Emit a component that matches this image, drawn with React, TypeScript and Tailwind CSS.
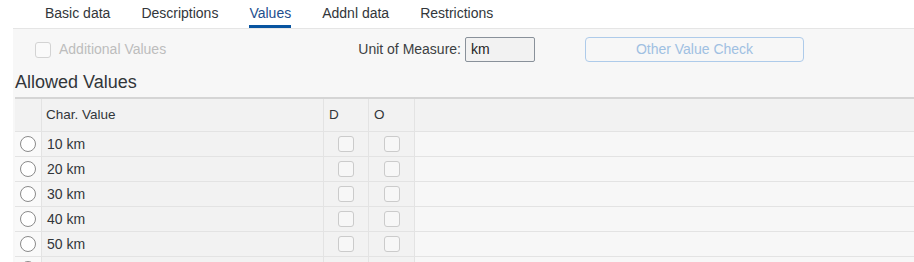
import React from "react";

const tabs = ["Basic data", "Descriptions", "Values", "Addnl data", "Restrictions"];
const rows = ["10 km", "20 km", "30 km", "40 km", "50 km", ""];

function Box() {
  return <div className="w-[16px] h-[16px] rounded-[3px] border border-[#cbcbcb] bg-[#f7f7f7]" />;
}

export default function App() {
  return (
    <div
      className="w-[914px] h-[262px] overflow-hidden bg-white flex flex-col text-[#32363a]"
      style={{ fontFamily: '"Liberation Sans", Arial, sans-serif' }}
    >
      {/* Tab bar */}
      <div className="ml-[13px] h-[29px] shrink-0 border-b border-[#e5e5e5] pl-[32px] flex gap-[31px]">
        {tabs.map((t) => (
          <div key={t} className="relative h-[28px] flex items-start pt-[5px] text-[14px] leading-[17px]">
            <span className={t === "Values" ? "text-[#1d4e8e]" : "text-[#32363a]"}>{t}</span>
            {t === "Values" && <div className="absolute left-0 right-0 bottom-0 h-[3px] bg-[#0854a0]" />}
          </div>
        ))}
      </div>

      {/* Content */}
      <div className="ml-[13px] flex-1 bg-[#f7f7f7] flex flex-col">
        <div className="pt-[8px] h-[33px] flex items-start shrink-0">
          <div className="w-[452px] h-[25px] flex items-center">
            <div className="pl-[22px] flex items-center gap-[8px]">
              <div className="w-[16px] h-[16px] rounded-[3px] border border-[#d3d3d3] bg-[#fafafa]" />
              <span className="text-[14px] text-[#bdbdbd]">Additional Values</span>
            </div>
            <span className="ml-auto pr-[4px] text-[14px] text-[#3c3f42]">Unit of Measure:</span>
          </div>
          <div className="w-[70px] h-[25px] rounded-[2px] border border-[#89919a] bg-[#f2f2f2] flex items-center pl-[5px] text-[14px] text-[#1f1f1f]">
            km
          </div>
          <div className="ml-[50px] w-[219px] h-[25px] rounded-[4px] border border-[#aecbea] flex items-center justify-center text-[14px] text-[#9fc0e2]">
            Other Value Check
          </div>
        </div>

        <div className="mt-[9px] pl-[2px] h-[22px] text-[18px] leading-[22px] text-[#32363a] shrink-0">
          Allowed Values
        </div>

        <div className="mt-[4px] ml-[2px] border-t-2 border-[#d5d5d5]">
          <div className="grid grid-cols-[27px_282px_45px_46px_1fr] h-[33px] bg-[#f2f2f2] text-[13.5px]">
            <div className="border-r border-b border-[#e3e3e3]" />
            <div className="border-r border-b border-[#e3e3e3] flex items-center pl-[4px]">Char. Value</div>
            <div className="border-r border-b border-[#e3e3e3] flex items-center pl-[5px]">D</div>
            <div className="border-r border-b border-[#e3e3e3] flex items-center pl-[5px]">O</div>
            <div className="border-b border-[#e3e3e3]" />
          </div>
          {rows.map((r, i) => (
            <div key={i} className="grid grid-cols-[27px_282px_45px_46px_1fr] h-[25px] text-[14px]">
              <div className="border-r border-b border-[#e3e3e3] bg-[#f9f9f9] flex items-center pl-[5px]">
                <div className="w-[16px] h-[16px] rounded-full border border-[#8a8a8a] bg-white" />
              </div>
              <div className="border-r border-b border-[#e3e3e3] bg-[#f2f2f2] flex items-center pl-[5px] text-[#32363a]">
                {r}
              </div>
              <div className="border-r border-b border-[#e3e3e3] bg-[#f2f2f2] flex items-center justify-center">
                {r && <Box />}
              </div>
              <div className="border-r border-b border-[#e3e3e3] bg-[#f2f2f2] flex items-center justify-center">
                {r && <Box />}
              </div>
              <div className="border-b border-[#e3e3e3] bg-[#f7f7f7]" />
            </div>
          ))}
        </div>
      </div>
    </div>
  );
}
